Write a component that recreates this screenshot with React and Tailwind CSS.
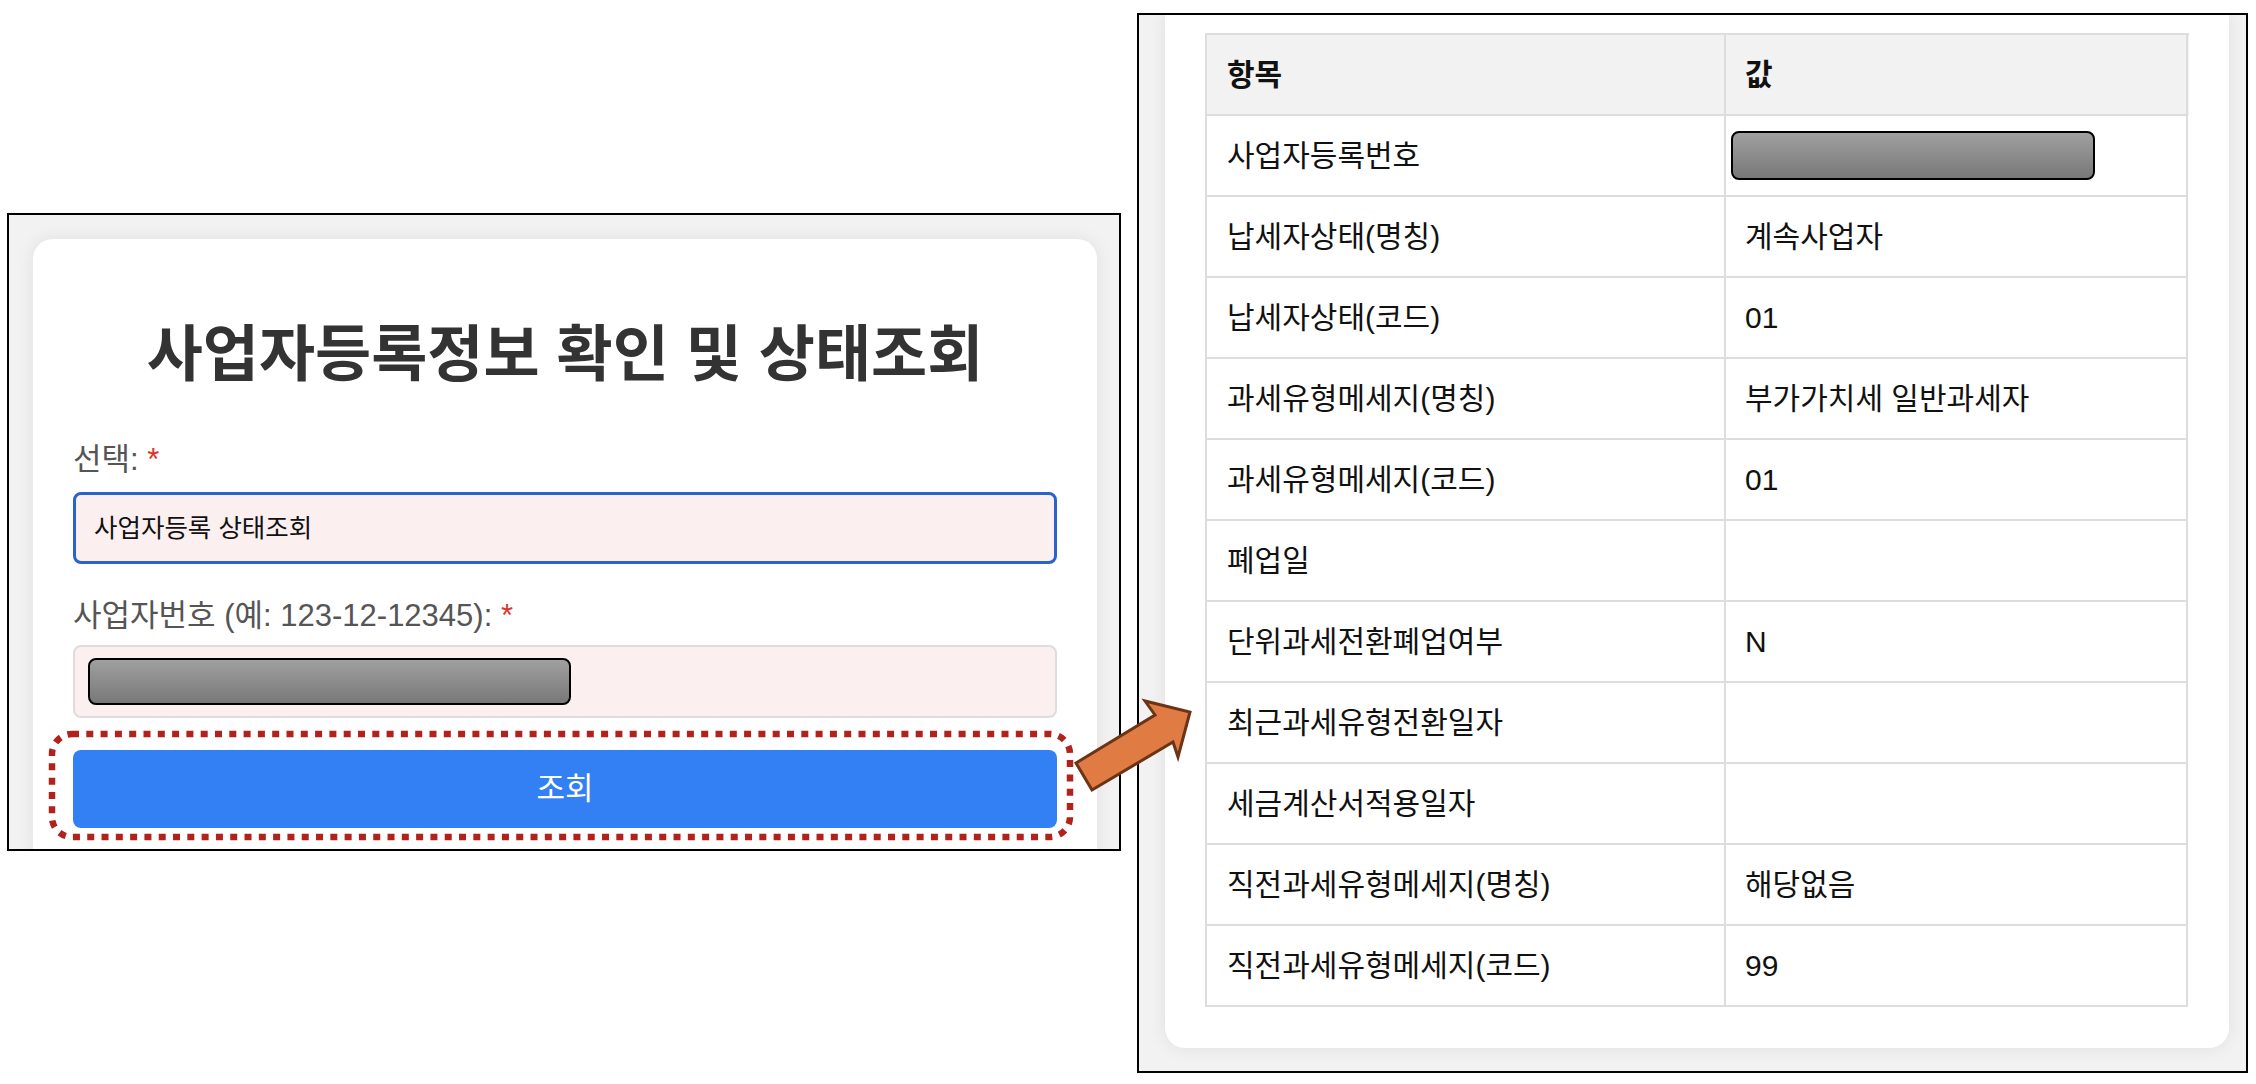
import React from 'react';

const rows = [
  ['사업자등록번호', null],
  ['납세자상태(명칭)', '계속사업자'],
  ['납세자상태(코드)', '01'],
  ['과세유형메세지(명칭)', '부가가치세 일반과세자'],
  ['과세유형메세지(코드)', '01'],
  ['폐업일', ''],
  ['단위과세전환폐업여부', 'N'],
  ['최근과세유형전환일자', ''],
  ['세금계산서적용일자', ''],
  ['직전과세유형메세지(명칭)', '해당없음'],
  ['직전과세유형메세지(코드)', '99'],
];

const Redacted = ({ className }) => (
  <div className={`rounded-[8px] border-2 border-black bg-gradient-to-b from-[#a0a0a0] to-[#787878] ${className}`} />
);

const FormPanel = () => (
  <div className="mt-[200px] w-[1114px] h-[638px] shrink-0 border-2 border-black bg-[#f2f2f2] overflow-hidden pt-[24px] pl-[24px] pr-[22px]">
    <div className="bg-white rounded-[20px] shadow-[0_0_18px_rgba(0,0,0,0.08)] px-[40px] pb-[40px] flex flex-col">
      <h1 className="mt-[86px] text-[61px] leading-none font-bold text-center text-[#333]">
        사업자등록정보 확인 및 상태조회
      </h1>
      <label className="mt-[58px] text-[31px] leading-none text-[#555]">
        선택: <span className="text-[#e0322a]">*</span>
      </label>
      <div className="mt-[17px] h-[72px] border-[3px] border-[#2a63c9] rounded-[8px] bg-[#fcefef] flex items-center pl-[18px] text-[25.5px] text-[#111]">
        사업자등록 상태조회
      </div>
      <label className="mt-[36px] text-[31px] leading-none text-[#555]">
        사업자번호 (예: 123-12-12345): <span className="text-[#e0322a]">*</span>
      </label>
      <div className="mt-[14px] h-[73px] border-2 border-[#dddddd] rounded-[8px] bg-[#fcefef] flex items-center pl-[13px]">
        <Redacted className="w-[483px] h-[47px]" />
      </div>
      <button className="mt-[32px] h-[78px] rounded-[8px] bg-[#3380f5] text-white text-[31px] flex items-center justify-center">
        조회
      </button>
    </div>
  </div>
);

const ResultPanel = () => (
  <div className="w-[1111px] h-[1060px] shrink-0 border-2 border-black bg-[#f2f2f2] overflow-hidden pl-[26px] pr-[17px] flex flex-col">
    <div className="bg-white rounded-b-[20px] shadow-[0_0_18px_rgba(0,0,0,0.08)] pt-[18px] pb-[41px] px-[40px]">
      <div className="border-l-2 border-t-2 border-[#dddddd] text-[30px] text-[#111]">
        <div className="grid grid-cols-[519px_462px] bg-[#f2f2f2] font-bold">
          <div className="h-[81px] border-r-2 border-b-2 border-[#dddddd] flex items-center px-[20px]">항목</div>
          <div className="h-[81px] border-r-2 border-b-2 border-[#dddddd] flex items-center px-[19px]">값</div>
        </div>
        {rows.map(([label, value]) => (
          <div key={label} className="grid grid-cols-[519px_462px]">
            <div className="h-[81px] border-r-2 border-b-2 border-[#dddddd] flex items-center px-[20px]">{label}</div>
            <div className="h-[81px] border-r-2 border-b-2 border-[#dddddd] flex items-center px-[19px]">
              {value === null ? <Redacted className="ml-[-14px] w-[364px] h-[49px]" /> : value}
            </div>
          </div>
        ))}
      </div>
    </div>
  </div>
);

export default function App() {
  return (
    <div
      className="relative w-[2256px] h-[1084px] bg-white overflow-hidden"
      style={{ fontFamily: '"Liberation Sans", "Noto Sans CJK KR", sans-serif' }}
    >
      <div className="flex items-start pl-[7px] pt-[13px] gap-[16px]">
        <FormPanel />
        <ResultPanel />
      </div>

      {/* annotation layer */}
      <svg className="absolute left-0 top-0 pointer-events-none" width="2256" height="1084" viewBox="0 0 2256 1084">
        <rect x="52" y="734" width="1018" height="103" rx="20" fill="none" stroke="#b0221b" strokeWidth="6.5" strokeDasharray="7 7.3" />
        <polygon
          points="1076,763 1155,715 1145,701 1190,712 1178,757 1173,742 1092,790"
          fill="#e07b43"
          stroke="#6b3414"
          strokeWidth="3"
          strokeLinejoin="miter"
        />
      </svg>
    </div>
  );
}
